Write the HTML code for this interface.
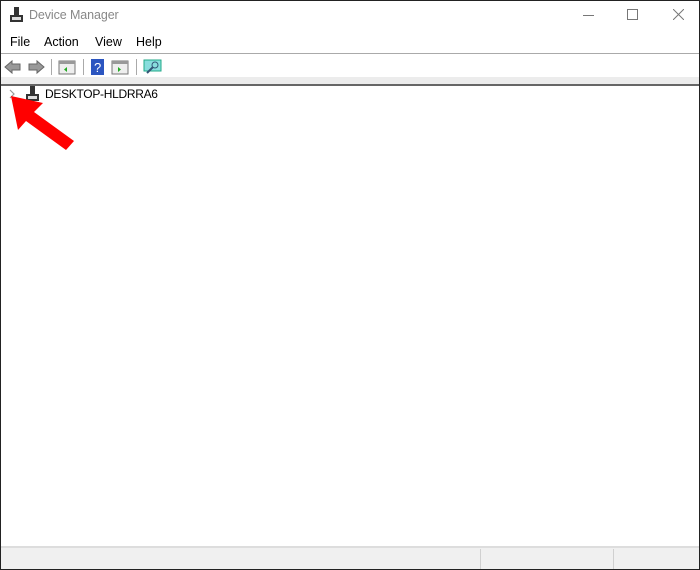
<!DOCTYPE html>
<html><head><style>
body{margin:0;width:700px;height:570px;overflow:hidden;background:#fff;font-family:"Liberation Sans",sans-serif;position:relative}
.a{position:absolute}
</style></head><body>
<div class="a" style="left:0;top:0;width:698px;height:568px;border:1px solid #222"></div>
<svg class="a" style="left:9px;top:7px" width="16" height="16"><rect x="5" y="0" width="5" height="8" fill="#333"/><rect x="1" y="8" width="13" height="7" fill="#333"/><rect x="3" y="10" width="9" height="3" fill="#ddd"/></svg>
<div class="a" style="left:29px;top:8px;font-size:12.5px;letter-spacing:-0.1px;color:#888">Device Manager</div>
<div class="a" style="left:583px;top:15px;width:11px;height:1px;background:#777"></div>
<div class="a" style="left:627px;top:9px;width:9px;height:9px;border:1px solid #777"></div>
<svg class="a" style="left:673px;top:9px" width="11" height="11"><path d="M0 0L11 11M11 0L0 11" stroke="#777"/></svg>
<div class="a" style="left:10px;top:35px;font-size:12.5px;color:#000">File</div>
<div class="a" style="left:44px;top:35px;font-size:12.5px">Action</div>
<div class="a" style="left:95px;top:35px;font-size:12.5px">View</div>
<div class="a" style="left:136px;top:35px;font-size:12.5px">Help</div>
<div class="a" style="left:1px;top:53px;width:698px;height:1px;background:#aaa"></div>
<svg class="a" style="left:4px;top:58px" width="165" height="18">
<path d="M1 9L8 3V6H16V12H8V15Z" fill="#999" stroke="#666"/>
<path d="M40 9L33 3V6H25V12H33V15Z" fill="#999" stroke="#666"/>
<rect x="47" y="1" width="1" height="16" fill="#aaa"/>
<rect x="55" y="3" width="16" height="13" fill="#eee" stroke="#777"/><rect x="55" y="3" width="16" height="3" fill="#999"/><path d="M63 9L60 11.5L63 14Z" fill="#2a2"/>
<rect x="79" y="1" width="1" height="16" fill="#aaa"/>
<rect x="87" y="1" width="13" height="16" fill="#2b55c0"/><text x="90" y="14" font-size="13" fill="#fff" font-family="Liberation Sans">?</text>
<rect x="108" y="3" width="16" height="13" fill="#eee" stroke="#777"/><rect x="108" y="3" width="16" height="3" fill="#999"/><path d="M114 9L117 11.5L114 14Z" fill="#2a2"/>
<rect x="132" y="1" width="1" height="16" fill="#aaa"/>
<rect x="140" y="2" width="17" height="11" fill="#8dd" stroke="#2a8"/><circle cx="151" cy="7" r="3" fill="none" stroke="#357"/><path d="M149 9L143 15" stroke="#357" stroke-width="2"/>
</svg>
<div class="a" style="left:1px;top:77px;width:698px;height:7px;background:#ececec"></div>
<div class="a" style="left:1px;top:84px;width:698px;height:2px;background:#666"></div>
<svg class="a" style="left:8px;top:89px" width="8" height="10"><path d="M2 1L6 5L2 9" stroke="#999" fill="none" stroke-width="1.2"/></svg>
<svg class="a" style="left:25px;top:86px" width="16" height="16"><rect x="5" y="0" width="5" height="8" fill="#333"/><rect x="1" y="8" width="13" height="7" fill="#333"/><rect x="3" y="10" width="9" height="3" fill="#ddd"/></svg>
<div class="a" style="left:45px;top:87px;font-size:12px;letter-spacing:-0.3px">DESKTOP-HLDRRA6</div>
<svg class="a" style="left:8px;top:93px" width="70" height="60"><path d="M3 3L35 10L26 19L66 48L58 57L18 28L10 37Z" fill="#f00"/></svg>
<div class="a" style="left:1px;top:546px;width:698px;height:2px;background:#ddd"></div>
<div class="a" style="left:1px;top:548px;width:698px;height:21px;background:#f0f0f0"></div>
<div class="a" style="left:480px;top:549px;width:1px;height:20px;background:#d0d0d0"></div>
<div class="a" style="left:613px;top:549px;width:1px;height:20px;background:#d0d0d0"></div>
</body></html>
